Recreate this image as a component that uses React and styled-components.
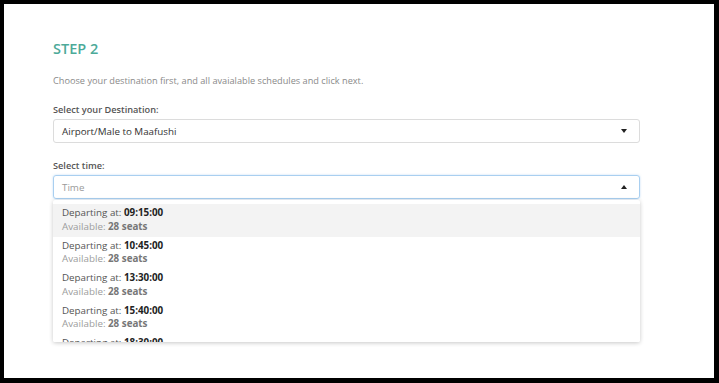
import React from 'react';
import styled, { createGlobalStyle } from 'styled-components';

const GlobalStyle = createGlobalStyle`
  html, body {
    margin: 0;
    padding: 0;
    background: #000;
  }
  body {
    font-family: "Open Sans", "Noto Sans", sans-serif;
  }
`;

const Frame = styled.div`
  width: 719px;
  height: 383px;
  box-sizing: border-box;
  padding: 4px 5px 5px 4px;
  background: #000;
`;

const Panel = styled.div`
  background: #fff;
  height: 100%;
  box-sizing: border-box;
  padding: 35px 0 0 49px;
`;

const Content = styled.div`
  width: 587px;
`;

const Heading = styled.h2`
  margin: 0;
  color: #4caa99;
  font-size: 14.5px;
  font-weight: 600;
  line-height: 20px;
`;

const Intro = styled.p`
  margin: 16px 0 0;
  color: #8a8a8a;
  font-size: 9.2px;
  line-height: 12px;
`;

const Field = styled.div`
  margin-top: 17px;
  position: relative;
`;

const Label = styled.div`
  color: #555;
  font-size: 9.2px;
  font-weight: 600;
  line-height: 12px;
  margin-bottom: 3px;
`;

const SelectBox = styled.div`
  height: 24px;
  box-sizing: border-box;
  border: 1px solid ${p => (p.$open ? '#a9cff0' : '#dcdcdc')};
  box-shadow: ${p => (p.$open ? '0 0 2px rgba(120,180,240,0.5)' : 'none')};
  border-radius: 3px;
  display: flex;
  align-items: center;
  justify-content: space-between;
  padding: 0 12px 0 8px;
  font-size: 9.8px;
  color: ${p => (p.$placeholder ? '#9a9a9a' : '#333')};
`;

const Caret = styled.span`
  width: 0;
  height: 0;
  border-left: 3.5px solid transparent;
  border-right: 3.5px solid transparent;
  ${p => (p.$up ? 'border-bottom: 4px solid #222;' : 'border-top: 4px solid #222;')}
`;

const Menu = styled.div`
  position: absolute;
  left: 0;
  right: 0;
  top: 40px;
  height: 142px;
  overflow: hidden;
  background: #fff;
  border-radius: 2px;
  box-shadow: 0 1px 4px rgba(0, 0, 0, 0.22);
  padding-top: 4px;
  box-sizing: border-box;
`;

const Option = styled.div`
  height: 32.5px;
  box-sizing: border-box;
  padding: 2px 9px 0;
  background: ${p => (p.$active ? '#f3f3f3' : '#fff')};
  font-size: 9.8px;
  line-height: 13.5px;
`;

const Line = styled.div`
  color: ${p => (p.$muted ? '#9c9c9c' : '#555')};
  b {
    font-weight: 700;
    color: ${p => (p.$muted ? '#777' : '#222')};
  }
`;

const times = ['09:15:00', '10:45:00', '13:30:00', '15:40:00', '18:30:00'];

export default function App() {
  return (
    <>
      <GlobalStyle />
      <Frame>
        <Panel>
          <Content>
            <Heading>STEP 2</Heading>
            <Intro>Choose your destination first, and all avaialable schedules and click next.</Intro>
            <Field>
              <Label>Select your Destination:</Label>
              <SelectBox>
                <span>Airport/Male to Maafushi</span>
                <Caret />
              </SelectBox>
            </Field>
            <Field>
              <Label>Select time:</Label>
              <SelectBox $open $placeholder>
                <span>Time</span>
                <Caret $up />
              </SelectBox>
              <Menu>
                {times.map((t, i) => (
                  <Option key={t} $active={i === 0}>
                    <Line>Departing at: <b>{t}</b></Line>
                    <Line $muted>Available: <b>28 seats</b></Line>
                  </Option>
                ))}
              </Menu>
            </Field>
          </Content>
        </Panel>
      </Frame>
    </>
  );
}
